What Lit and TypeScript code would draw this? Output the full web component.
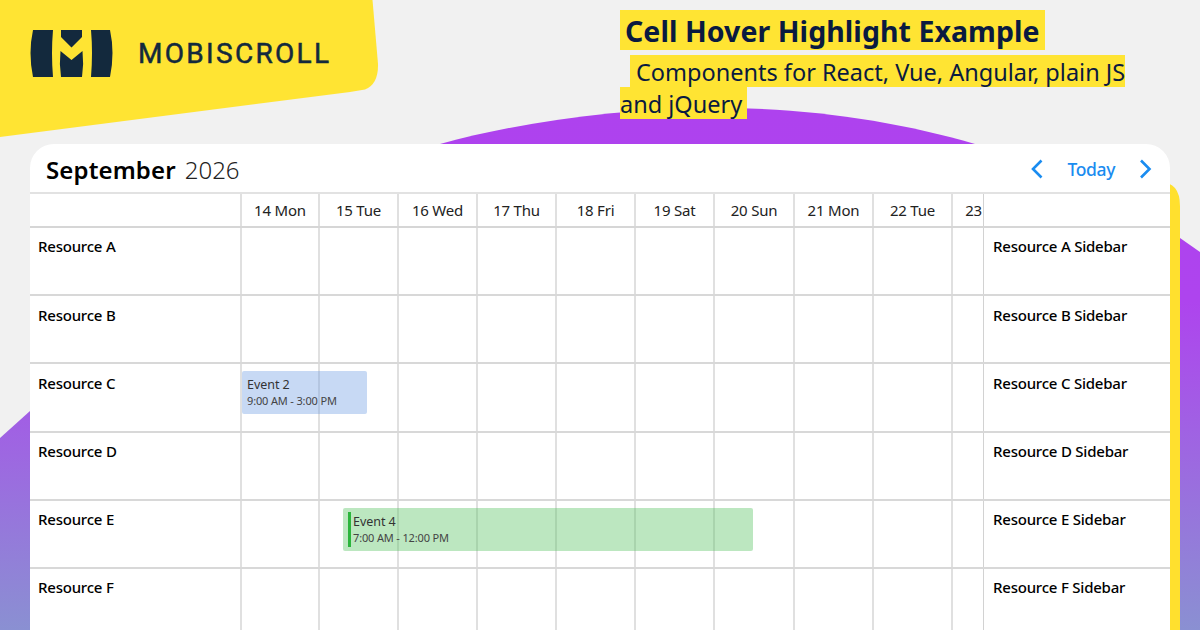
import { LitElement, html, css } from "lit";
import { customElement } from "lit/decorators.js";

const DAYS = ["14 Mon", "15 Tue", "16 Wed", "17 Thu", "18 Fri", "19 Sat", "20 Sun", "21 Mon", "22 Tue", "23"];
const WIDTHS = [78, 79, 79, 79, 79, 79, 80, 79, 79, 32];
const RES = ["A", "B", "C", "D", "E", "F"];

@customElement("app-root")
export class AppRoot extends LitElement {
  static styles = css`
    :host { display: block; width: 1200px; height: 630px; position: relative; overflow: hidden; background: #f1f1f1; font-family: "Noto Sans", "Open Sans", sans-serif; color: #000; }
    .bg { position: absolute; inset: 0; width: 1200px; height: 630px; }
    .head { position: relative; height: 144px; display: flex; }
    .logo { position: absolute; left: 0; top: 0; width: 400px; height: 150px; }
    .brand { position: absolute; left: 138px; top: 37px; font: 400 28px/34px "Roboto", sans-serif; letter-spacing: 2.3px; color: #13293d; -webkit-text-stroke: 0.5px #13293d; }
    .titles { position: absolute; left: 620px; top: 10px; width: 530px; color: #0a1a40; }
    .t1 { display: inline-block; vertical-align: top; background: #ffe433; font-size: 28.5px; font-weight: 700; line-height: 42px; height: 40px; padding: 0 5px; letter-spacing: 0.05px; white-space: nowrap; }
    .t2 { margin-top: 6px; font-size: 23.5px; line-height: 32px; }
    .t2 span { background: linear-gradient(#ffe433 calc(100% - 1px), transparent 0); margin-left: 10px; padding: 1px 5px 0 6px; }
    .cal { position: relative; margin-left: 30px; width: 1140px; height: 486px; background: #fff; border-radius: 24px 24px 0 0; overflow: hidden; }
    .bar { height: 50px; display: flex; align-items: center; border-bottom: 2px solid #e2e2e2; box-sizing: border-box; padding: 1px 17px 0 16px; }
    .month { font-size: 24px; font-weight: 600; letter-spacing: 0.13px; margin-top: 2px; }
    .year { font-size: 24px; font-weight: 300; margin: 2px 0 0 9px; color: #222; }
    .nav { margin-left: auto; display: flex; align-items: center; color: #1a8cf0; }
    .today { font-size: 17.5px; font-weight: 500; margin: 0 24px; letter-spacing: -0.4px; }
    .nav svg { display: block; }
    .row { display: flex; box-sizing: border-box; border-bottom: 2px solid #d8d8d8; }
    .hrow { height: 34px; border-bottom: 2px solid #d6d6d6; }
    .rrow { height: 68.2px; }
    .side { width: 210px; flex: none; box-sizing: border-box; padding: 8.4px 8px; font-size: 15px; font-weight: 500; line-height: 20px; color: #000; letter-spacing: -0.22px; }
    .rside { width: 187px; border-left: 1px solid #d2d2d2; padding-left: 9px; }
    .hcell, .cell { flex: none; box-sizing: border-box; border-left: 2px solid #e0e0e0; }
    .hcell { font-size: 15px; line-height: 32px; text-align: center; color: #222; white-space: nowrap; overflow: hidden; letter-spacing: -0.2px; }
    .hcell.clip { text-align: right; padding-right: 1px; }
    .ev { position: absolute; box-sizing: border-box; height: 43px; border-radius: 2px; padding: 6px 5px; color: #333; }
    .ev b { display: block; font-weight: 400; font-size: 12.5px; line-height: 16px; letter-spacing: -0.05px; }
    .ev i { display: block; font-style: normal; font-size: 11px; line-height: 16px; letter-spacing: -0.15px; color: #444; }
    .e2 { left: 212px; top: 227px; width: 125px; background: rgba(108, 155, 226, 0.38); }
    .e4 { left: 313px; top: 364px; width: 410px; background: rgba(88, 196, 98, 0.4); padding-left: 10px; }
    .e4::before { content: ""; position: absolute; left: 5px; top: 4px; bottom: 4px; width: 3px; background: #2bb53c; }
  `;

  render() {
    return html`
      <svg class="bg" viewBox="0 0 1200 630">
        <defs><linearGradient id="g" x1="0" y1="0" x2="0" y2="1">
          <stop offset="0" stop-color="#ae42ee"/><stop offset="0.37" stop-color="#ae44ee"/><stop offset="1" stop-color="#8a90d2"/>
        </linearGradient></defs>
        <path fill="url(#g)" d="M0 630 V438 L30 411 L440 144 C520 122 620 108 720 108 C810 108 900 122 975 144 C1050 168 1120 198 1180 238 L1200 252 V630 Z"/>
        <path fill="#ffe02e" d="M1100 182 H1160 Q1180 182 1180 206 V630 H1170 V182 Z"/>
      </svg>
      <div class="head">
        <svg class="logo" viewBox="0 0 400 150">
          <path fill="#ffe433" d="M0 0 H372.5 L378 64 Q378.5 84 365 89.5 L350 92 L0 137 Z"/>
          <path fill="#13293d" d="M33 30 H53 Q51 53 53 77 H33 Q28 53 33 30 Z M91 30 H110 Q115 53 110 77 H91 Q93 53 91 30 Z M61 30 H82 V37 L71.5 47.5 L61 37 Z M60.5 51 L71.5 60 L82.5 51 Q84 64 82 77 H61 Q59 64 60.5 51 Z"/>
        </svg>
        <div class="brand">MOBISCROLL</div>
        <div class="titles">
          <div class="t1">Cell Hover Highlight Example</div>
          <div class="t2"><span>Components for React, Vue, Angular, plain JS and jQuery</span></div>
        </div>
      </div>
      <div class="cal">
        <div class="bar">
          <span class="month">September</span><span class="year">2026</span>
          <div class="nav">
            <svg width="14" height="20" viewBox="0 0 14 20"><path d="M11.5 1.5 L3 10 L11.5 18.5" fill="none" stroke="currentColor" stroke-width="2.6"/></svg>
            <span class="today">Today</span>
            <svg width="14" height="20" viewBox="0 0 14 20"><path d="M2 1.5 L10.5 10 L2 18.5" fill="none" stroke="currentColor" stroke-width="2.6"/></svg>
          </div>
        </div>
        <div class="row hrow">
          <div class="side"></div>
          ${DAYS.map((d, i) => html`<div class="hcell ${i === 9 ? "clip" : ""}" style="width:${WIDTHS[i]}px">${d}</div>`)}
          <div class="side rside"></div>
        </div>
        ${RES.map(r => html`
          <div class="row rrow">
            <div class="side">Resource ${r}</div>
            ${WIDTHS.map(w => html`<div class="cell" style="width:${w}px"></div>`)}
            <div class="side rside">Resource ${r} Sidebar</div>
          </div>`)}
        <div class="ev e2"><b>Event 2</b><i>9:00 AM - 3:00 PM</i></div>
        <div class="ev e4"><b>Event 4</b><i>7:00 AM - 12:00 PM</i></div>
      </div>
    `;
  }
}
